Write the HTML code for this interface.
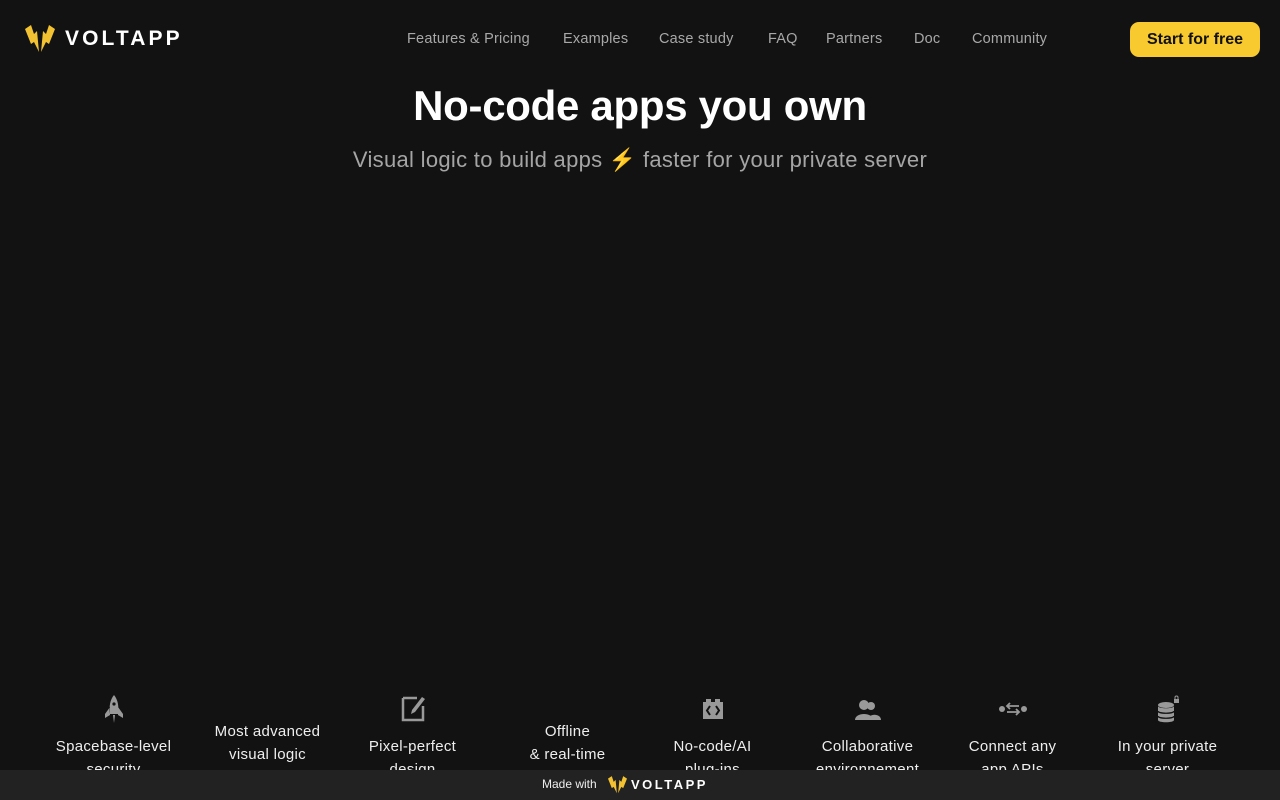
<!DOCTYPE html>
<html><head><meta charset="utf-8"><style>
*{margin:0;padding:0;box-sizing:border-box}
body{width:1280px;height:800px;background:#121212;font-family:"Liberation Sans",sans-serif;color:#fff;position:relative;overflow:hidden}
.a{position:absolute;white-space:nowrap}
.nav{top:31px;font-size:14.5px;color:#a8a8a8;letter-spacing:0.2px}
.btn{left:1130px;top:22px;width:130px;height:35px;background:#f8ca2f;border-radius:9px;color:#111;font-weight:bold;font-size:16px;text-align:center;line-height:35px}
h1{position:absolute;top:82px;width:1280px;text-align:center;font-size:42px;font-weight:bold;letter-spacing:-0.3px}
.sub{top:147px;width:1280px;text-align:center;font-size:22px;color:#a5a5a5;letter-spacing:0.3px}
.col{position:absolute;width:151px;top:690px;height:80px;text-align:center;font-size:15px;line-height:23px;color:#eee;overflow:hidden;letter-spacing:0.3px}
.col svg{display:block;margin:4px auto 11px}
.foot{position:absolute;left:0;top:770px;width:1280px;height:30px;background:#222}
</style></head><body>
<svg class="a" style="left:25px;top:25px" width="30" height="28" viewBox="0 0 30 28"><path d="M0 4 L6 0 L9 9 L12 6 L14 27 L9 17 L6 19Z M30 4 L24 0 L21 9 L18 6 L16 27 L21 17 L24 19Z" fill="#f2c232"/></svg>
<div class="a" style="left:65px;top:27px;font-size:21px;font-weight:bold;letter-spacing:3.1px">VOLTAPP</div>
<div class="a nav" style="left:407px">Features &amp; Pricing</div>
<div class="a nav" style="left:563px">Examples</div>
<div class="a nav" style="left:659px">Case study</div>
<div class="a nav" style="left:768px">FAQ</div>
<div class="a nav" style="left:826px">Partners</div>
<div class="a nav" style="left:914px">Doc</div>
<div class="a nav" style="left:972px">Community</div>
<div class="a btn">Start for free</div>
<h1>No-code apps you own</h1>
<div class="a sub">Visual logic to build apps ⚡ faster for your private server</div>

<div class="col" style="left:38px"><svg width="24" height="30" viewBox="0 0 24 30"><path d="M12 1 C16 6 17 12 16 20 L8 20 C7 12 8 6 12 1Z M8 13 L3 20 L3 24 L8 21Z M16 13 L21 20 L21 24 L16 21Z M11 21 L13 21 L12 29Z" fill="#999"/><circle cx="12" cy="10" r="1.6" fill="#121212"/></svg>Spacebase-level<br>security</div>
<div class="col" style="left:192px;top:720px">Most advanced<br>visual logic</div>
<div class="col" style="left:337px"><svg width="24" height="30" viewBox="0 0 24 30"><path d="M2 4 H16 M2 4 V26 H22 V12" stroke="#999" stroke-width="2.5" fill="none"/><path d="M21 3 L24 5 L14 18 L10 20 L11 16Z" fill="#999"/></svg>Pixel-perfect<br>design</div>
<div class="col" style="left:492px;top:720px">Offline<br>&amp; real-time</div>
<div class="col" style="left:637px"><svg width="24" height="30" viewBox="0 0 24 30"><path d="M2 8 H22 V25 H2Z M5 5 H10 V8 H5Z M14 5 H19 V8 H14Z" fill="#999"/><path d="M9 12 L6 16.5 L9 21 M15 12 L18 16.5 L15 21" stroke="#121212" stroke-width="2" fill="none"/></svg>No-code/AI<br>plug-ins</div>
<div class="col" style="left:792px"><svg width="28" height="30" viewBox="0 0 28 30"><circle cx="10" cy="11" r="5" fill="#999"/><path d="M1 26 C1 18 19 18 19 26Z" fill="#999"/><circle cx="17" cy="12" r="4" fill="#999"/><path d="M14 26 C14 19 27 19 27 26Z" fill="#999"/></svg>Collaborative<br>environnement</div>
<div class="col" style="left:937px"><svg width="28" height="30" viewBox="0 0 28 30"><circle cx="3" cy="15" r="3" fill="#999"/><circle cx="25" cy="15" r="3" fill="#999"/><path d="M20 12 H8 M11 9 L8 12 L11 15 M8 18 H20 M17 15 L20 18 L17 21" stroke="#999" stroke-width="1.8" fill="none"/></svg>Connect any<br>app APIs</div>
<div class="col" style="left:1092px"><svg width="28" height="30" viewBox="0 0 28 30"><ellipse cx="12" cy="11" rx="8" ry="3" fill="#999"/><path d="M4 12 V26 C4 29 20 29 20 26 V12 C20 15 4 15 4 12Z" fill="#999"/><path d="M4 17 C4 20 20 20 20 17 M4 22 C4 25 20 25 20 22" stroke="#121212" stroke-width="1.3" fill="none"/><rect x="20" y="5" width="5" height="4" fill="#999"/><path d="M21 5 V3.5 A1.5 1.5 0 0 1 24 3.5 V5" stroke="#999" fill="none"/></svg>In your private<br>server</div>

<div class="foot"></div>
<div class="a" style="left:542px;top:777px;font-size:12px;color:#eee">Made with</div>
<svg class="a" style="left:608px;top:776px" width="19" height="18" viewBox="0 0 30 28"><path d="M0 4 L6 0 L9 9 L12 6 L14 27 L9 17 L6 19Z M30 4 L24 0 L21 9 L18 6 L16 27 L21 17 L24 19Z" fill="#f2c232"/></svg>
<div class="a" style="left:631px;top:777px;font-size:13px;font-weight:bold;letter-spacing:2.5px">VOLTAPP</div>
</body></html>
